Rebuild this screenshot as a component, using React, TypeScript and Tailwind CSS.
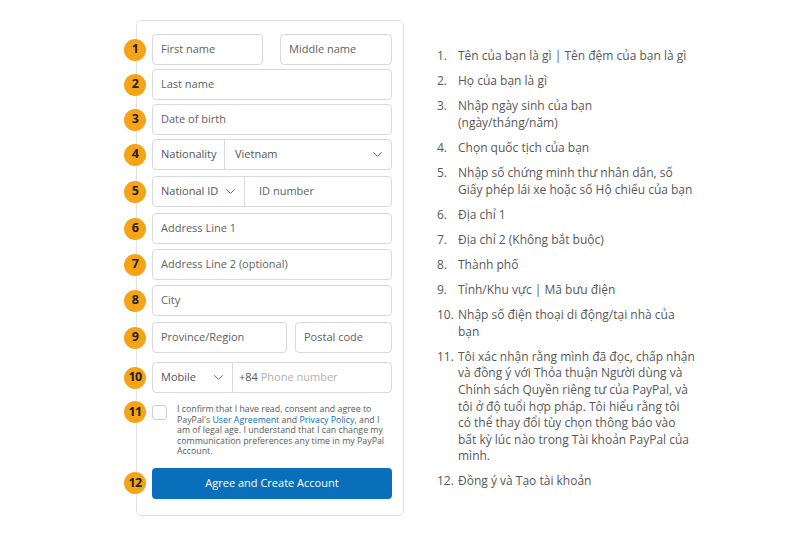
import React from "react";
import { ChevronDown } from "lucide-react";

const font = { fontFamily: '"Open Sans", "Noto Sans", sans-serif' };

function Badge({ n }: { n: string }) {
  return (
    <div className="-ml-[28px] mr-[6px] flex h-[22px] w-[22px] shrink-0 items-center justify-center rounded-full bg-[#f5a418] text-[12.5px] font-bold tracking-[-0.6px] text-[#1f1f1f]">
      {n}
    </div>
  );
}

function Field({ label, className = "" }: { label: string; className?: string }) {
  return (
    <div
      className={`flex h-full items-center rounded-[4px] border border-[#d9d9d9] pl-[8px] text-[11px] text-[#616161] ${className}`}
    >
      {label}
    </div>
  );
}

function Chevron() {
  return <ChevronDown size={15} strokeWidth={1.5} className="text-[#555]" />;
}

const steps: { n: string; lines: string[] }[] = [
  { n: "1.", lines: ["Tên của bạn là gì | Tên đệm của bạn là gì"] },
  { n: "2.", lines: ["Họ của bạn là gì"] },
  { n: "3.", lines: ["Nhập ngày sinh của bạn", "(ngày/tháng/năm)"] },
  { n: "4.", lines: ["Chọn quốc tịch của bạn"] },
  { n: "5.", lines: ["Nhập số chứng minh thư nhân dân, số", "Giấy phép lái xe hoặc số Hộ chiếu của bạn"] },
  { n: "6.", lines: ["Địa chỉ 1"] },
  { n: "7.", lines: ["Địa chỉ 2 (Không bắt buộc)"] },
  { n: "8.", lines: ["Thành phố"] },
  { n: "9.", lines: ["Tỉnh/Khu vực | Mã bưu điện"] },
  { n: "10.", lines: ["Nhập số điện thoại di động/tại nhà của", "bạn"] },
  {
    n: "11.",
    lines: [
      "Tôi xác nhận rằng mình đã đọc, chấp nhận",
      "và đồng ý với Thỏa thuận Người dùng và",
      "Chính sách Quyền riêng tư của PayPal, và",
      "tôi ở độ tuổi hợp pháp. Tôi hiểu rằng tôi",
      "có thể thay đổi tùy chọn thông báo vào",
      "bất kỳ lúc nào trong Tài khoản PayPal của",
      "mình.",
    ],
  },
  { n: "12.", lines: ["Đồng ý và Tạo tài khoản"] },
];

export default function App() {
  return (
    <div className="flex h-[533px] w-[800px] items-start bg-white" style={font}>
      {/* sign-up form card */}
      <div className="ml-[136px] mt-[20px] flex h-[496px] w-[268px] flex-col rounded-[5px] border border-[#e2e2e2] pl-[15px] pr-[11px] pt-[13px]">
        <div className="flex h-[31px] items-center">
          <Badge n="1" />
          <div className="flex h-full flex-1 gap-[17px]">
            <Field label="First name" className="w-[111px]" />
            <Field label="Middle name" className="flex-1" />
          </div>
        </div>

        <div className="mt-[4px] flex h-[31px] items-center">
          <Badge n="2" />
          <Field label="Last name" className="flex-1" />
        </div>

        <div className="mt-[4px] flex h-[31px] items-center">
          <Badge n="3" />
          <Field label="Date of birth" className="flex-1" />
        </div>

        <div className="mt-[4px] flex h-[31px] items-center">
          <Badge n="4" />
          <div className="flex h-full flex-1 items-center rounded-[4px] border border-[#d9d9d9] text-[11px] text-[#555]">
            <div className="flex h-full w-[72px] items-center border-r border-[#d9d9d9] pl-[8px]">Nationality</div>
            <div className="flex flex-1 items-center justify-between pl-[10px] pr-[6px]">
              <span>Vietnam</span>
              <Chevron />
            </div>
          </div>
        </div>

        <div className="mt-[6px] flex h-[31px] items-center">
          <Badge n="5" />
          <div className="flex h-full flex-1 items-center rounded-[4px] border border-[#d9d9d9] text-[11px] text-[#555]">
            <div className="flex h-full w-[92px] items-center justify-between border-r border-[#d9d9d9] pl-[8px] pr-[6px]">
              <span>National ID</span>
              <Chevron />
            </div>
            <div className="pl-[14px] text-[#616161]">ID number</div>
          </div>
        </div>

        <div className="mt-[6px] flex h-[31px] items-center">
          <Badge n="6" />
          <Field label="Address Line 1" className="flex-1" />
        </div>

        <div className="mt-[5px] flex h-[31px] items-center">
          <Badge n="7" />
          <Field label="Address Line 2 (optional)" className="flex-1" />
        </div>

        <div className="mt-[5px] flex h-[31px] items-center">
          <Badge n="8" />
          <Field label="City" className="flex-1" />
        </div>

        <div className="mt-[6px] flex h-[31px] items-center">
          <Badge n="9" />
          <div className="flex h-full flex-1 gap-[8px]">
            <Field label="Province/Region" className="w-[135px]" />
            <Field label="Postal code" className="flex-1" />
          </div>
        </div>

        <div className="mt-[9px] flex h-[31px] items-center">
          <Badge n="10" />
          <div className="flex h-full flex-1 items-center rounded-[4px] border border-[#d9d9d9] text-[11px] text-[#555]">
            <div className="flex h-full w-[80px] items-center justify-between border-r border-[#d9d9d9] pl-[8px] pr-[6px]">
              <span>Mobile</span>
              <Chevron />
            </div>
            <div className="pl-[6px]">
              +84 <span className="text-[#b0b0b0]">Phone number</span>
            </div>
          </div>
        </div>

        <div className="mt-[12px] flex items-start">
          <div className="-mt-[4px]">
            <Badge n="11" />
          </div>
          <div className="h-[15px] w-[15px] shrink-0 rounded-[3px] border border-[#cfcfcf]" />
          <p className="ml-[10px] -mt-[1px] whitespace-nowrap text-[8.8px] leading-[10.6px] text-[#5a5a5a]">
            I confirm that I have read, consent and agree to
            <br />
            PayPal's <span className="text-[#0b6fb8]">User Agreement</span> and{" "}
            <span className="text-[#0b6fb8]">Privacy Policy</span>, and I
            <br />
            am of legal age. I understand that I can change my
            <br />
            communication preferences any time in my PayPal
            <br />
            Account.
          </p>
        </div>

        <div className="mt-[11px] flex h-[31px] items-center">
          <Badge n="12" />
          <button className="flex h-full flex-1 items-center justify-center rounded-[4px] bg-[#0a6fba] text-[11px] text-white">
            Agree and Create Account
          </button>
        </div>
      </div>

      {/* explanation of each numbered field */}
      <ol className="ml-[33px] mt-[48px] flex flex-col gap-[8.5px] text-[12px] leading-[16.6px] text-[#585858]">
        {steps.map((s) => (
          <li key={s.n} className="flex whitespace-nowrap">
            <span className="w-[21px] shrink-0">{s.n}</span>
            <span>
              {s.lines.map((l, i) => (
                <React.Fragment key={i}>
                  {i > 0 && <br />}
                  {l}
                </React.Fragment>
              ))}
            </span>
          </li>
        ))}
      </ol>
    </div>
  );
}
